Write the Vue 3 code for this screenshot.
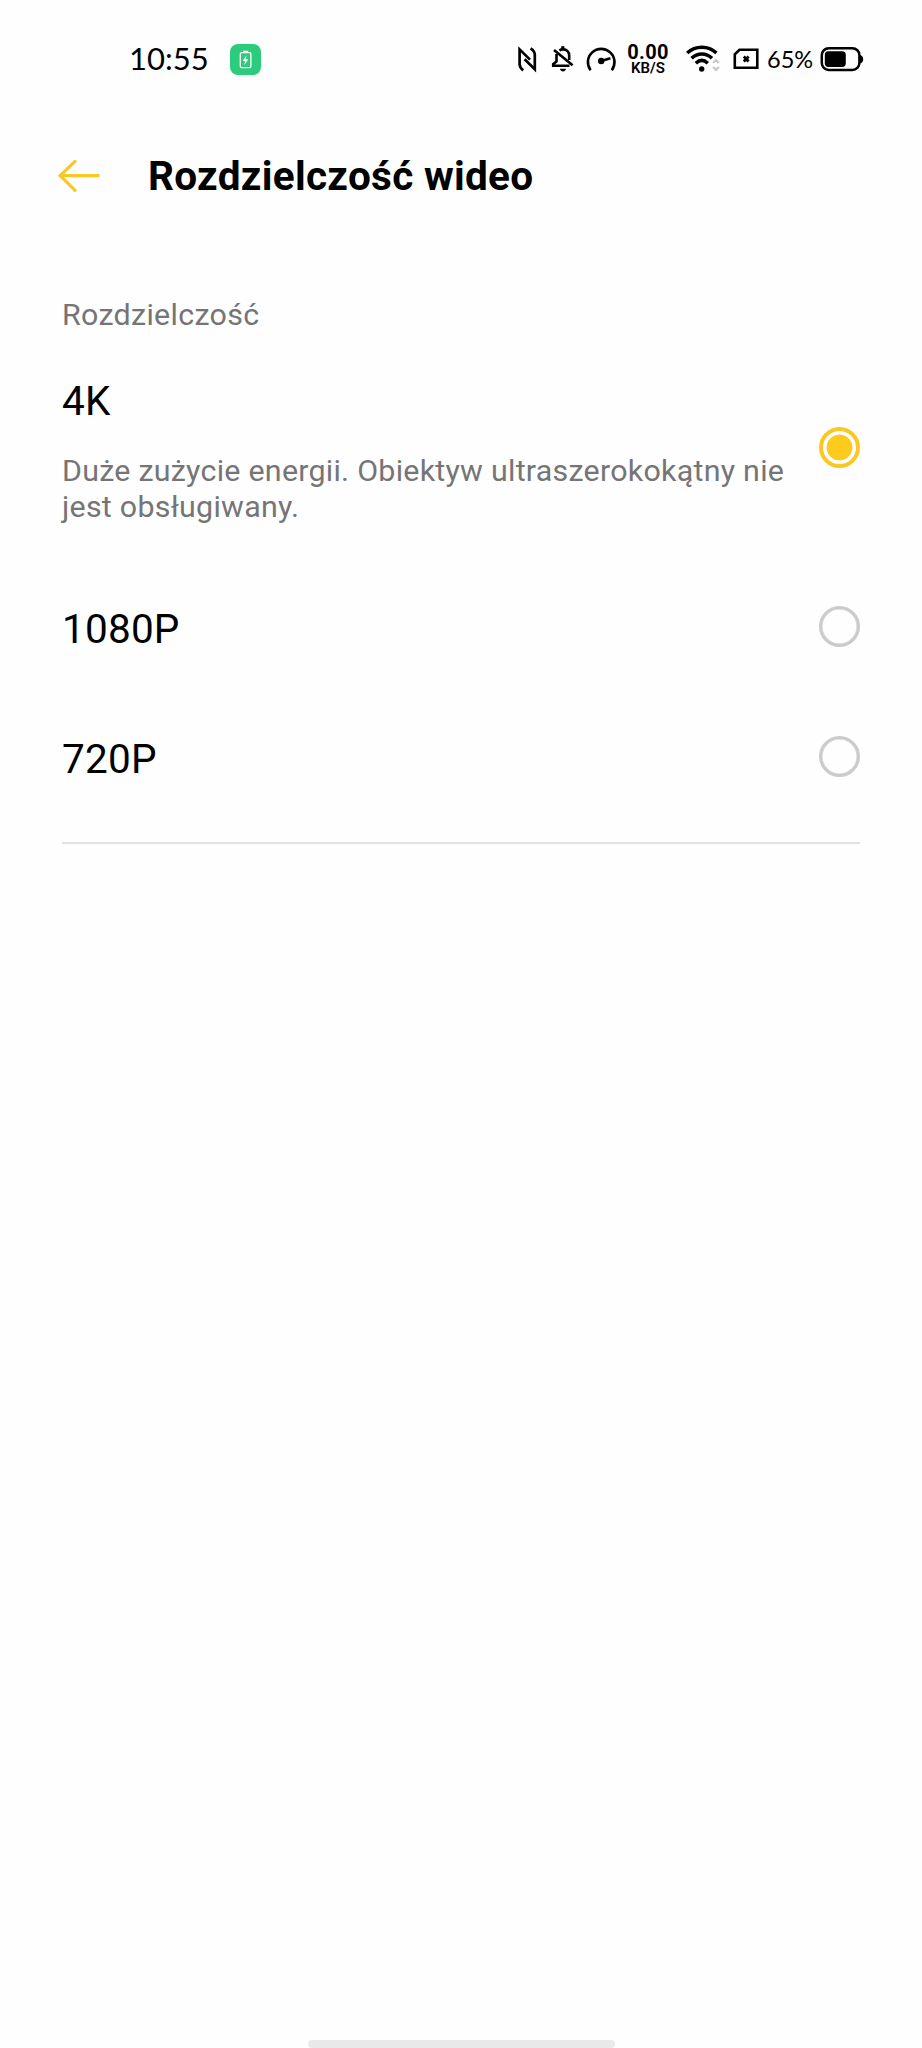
<template>
  <div class="screen">
    <header class="status-bar">
      <div class="status-left">
        <span class="clock">10:55</span>
        <span class="charge-badge">
          <svg width="31" height="31" viewBox="0 0 31 31" fill="none">
            <rect x="10.3" y="8.7" width="10.6" height="15" rx="1.4" stroke="#fff" stroke-width="1.3" />
            <path d="M13 7.5h5.2" stroke="#fff" stroke-width="1.6" />
            <path d="M16.6 11.3l-4 5.7h2.5l-.8 4 4-5.8h-2.6z" fill="#fff" />
          </svg>
        </span>
      </div>

      <div class="status-right">
        <!-- NFC -->
        <svg class="icon-nfc" width="20" height="30" viewBox="0 0 20 30" fill="none" stroke="#000" stroke-width="2.7">
          <path d="M5.2 26.4C2.6 24.4 1.6 22.8 1.6 20V5.4L12 15.6" />
          <path d="M12.6 4.4C15.8 6.4 16.8 8 16.8 10.8V25.2L6.6 15.2" />
        </svg>
        <!-- Wyciszony dzwonek -->
        <svg class="icon-bell" width="24" height="30" viewBox="0 0 24 30" fill="none" stroke="#000" stroke-width="2.6">
          <path d="M8.4 6.6C9.4 5.8 10.6 5.4 12 5.4C16 5.4 18.2 8 18.2 11.6V16" />
          <path d="M5.5 10V17.5L2.2 20.2V21.8H18.5" />
          <path d="M11.8 2.2V5" stroke-width="3.2" />
          <path d="M3 6L21.6 21.2" />
          <path d="M9 24.8H15C14.6 26.5 13.6 27.4 12 27.4S9.4 26.5 9 24.8Z" fill="#000" stroke="none" />
        </svg>
        <!-- Prędkość -->
        <svg class="icon-gauge" width="32" height="30" viewBox="0 0 32 30" fill="none" stroke="#000" stroke-width="2.6">
          <path d="M4.6 26.2A13.3 13.3 0 1 1 25.8 26.2" />
          <path d="M15.2 17L24.4 14.2" stroke-width="2.5" />
          <circle cx="15.2" cy="17" r="3.2" fill="#000" stroke="none" />
        </svg>
        <div class="net-speed">
          <span class="net-value">0.00</span>
          <span class="net-unit">KB/S</span>
        </div>
        <!-- Wi-Fi -->
        <svg class="icon-wifi" width="36" height="30" viewBox="0 0 36 30" fill="none" stroke="#000" stroke-width="3.6">
          <path d="M1.2 9C9.5 1.4 22.1 1.4 30.4 9" />
          <path d="M5.6 14.2C11.6 8.6 20 8.6 26 14.2" />
          <path d="M9.8 19.2C13.6 15.7 18 15.7 21.8 19.2" />
          <circle cx="15.7" cy="25" r="2.7" fill="#000" stroke="none" />
          <path d="M27.1 19L30 16.2L32.9 19" stroke="#c9c9c9" stroke-width="2.3" />
          <path d="M27.1 23L30 25.8L32.9 23" stroke="#c9c9c9" stroke-width="2.3" />
        </svg>
        <!-- Brak karty SIM -->
        <svg class="icon-sim" width="26" height="30" viewBox="0 0 26 30" fill="none" stroke="#000" stroke-width="2.6">
          <path d="M6.5 5.8H24.3V23.8H1.8V10.3Z" />
          <path d="M10.8 12.6L15.6 17.4M15.6 12.6L10.8 17.4" stroke-width="2.8" />
        </svg>
        <span class="battery-level">65%</span>
        <!-- Bateria -->
        <svg class="icon-battery" width="44" height="30" viewBox="0 0 44 30" fill="none">
          <rect x="1.8" y="4.2" width="37.6" height="21.8" rx="7" stroke="#000" stroke-width="2.5" />
          <rect x="4.8" y="7.3" width="21" height="15.6" rx="3.6" fill="#000" />
          <path d="M40 11C42 11.5 43.2 13 43.2 15.2S42 19 40 19.5Z" fill="#000" />
        </svg>
      </div>
    </header>

    <div class="title-bar">
      <button class="back-btn" aria-label="Wstecz">
        <svg width="42" height="34" viewBox="0 0 42 34" fill="none" stroke="#f9c822" stroke-width="3.2" stroke-linecap="round" stroke-linejoin="round">
          <path d="M17 2.4L2.2 16.7L17 31.3" />
          <path d="M2.2 16.7H40.2" />
        </svg>
      </button>
      <h1 class="title">Rozdzielczość wideo</h1>
    </div>

    <main class="content">
      <p class="section-label">Rozdzielczość</p>
      <div class="options" role="radiogroup">
        <div
          v-for="option in options"
          :key="option.name"
          class="option"
          :class="{ 'has-description': option.description }"
          role="radio"
          :aria-checked="selected === option.name"
          @click="selected = option.name"
        >
          <div class="option-text">
            <div class="option-name">{{ option.name }}</div>
            <p v-if="option.description" class="option-description">{{ option.description }}</p>
          </div>
          <span class="radio" :class="{ checked: selected === option.name }"></span>
        </div>
      </div>
    </main>

    <div class="home-indicator"></div>
  </div>
</template>

<script setup>
import { ref } from 'vue';

const options = [
  {
    name: '4K',
    description: 'Duże zużycie energii. Obiektyw ultraszerokokątny nie jest obsługiwany.'
  },
  { name: '1080P' },
  { name: '720P' }
];

const selected = ref('4K');
</script>

<style>
body {
  margin: 0;
  background: #fefefe;
}
</style>

<style scoped>
.screen {
  display: flex;
  flex-direction: column;
  width: 922px;
  height: 2048px;
  overflow: hidden;
  background: #fefefe;
  color: #000;
  font-family: Roboto, "Liberation Sans", sans-serif;
}

/* Pasek stanu */
.status-bar {
  display: flex;
  justify-content: space-between;
  height: 118px;
  padding: 0 58px 0 129px;
}

.status-left,
.status-right {
  display: flex;
  align-items: center;
}

.clock {
  width: 101px;
  padding-bottom: 2px;
  font-family: Lato, sans-serif;
  font-size: 31px;
  line-height: 36px;
}

.charge-badge {
  width: 31px;
  height: 31px;
  border-radius: 8px;
  background: #2dcc7c;
}

.icon-bell {
  margin-left: 13px;
}

.icon-gauge {
  margin-left: 11px;
}

.net-speed {
  display: flex;
  flex-direction: column;
  align-items: center;
  width: 42px;
  margin-left: 9px;
  margin-right: 1px;
  padding-top: 2px;
}

.net-value {
  font-size: 20px;
  font-weight: 700;
  letter-spacing: 0.3px;
  line-height: 17px;
}

.net-unit {
  font-size: 15px;
  font-weight: 600;
  line-height: 15px;
}

.icon-wifi {
  margin-left: 16px;
}

.icon-sim {
  margin-left: 11px;
}

.battery-level {
  width: 53px;
  margin-left: 8px;
  font-family: Lato, sans-serif;
  font-size: 23.5px;
  line-height: 30px;
}

/* Nagłówek */
.title-bar {
  display: flex;
  align-items: center;
  height: 116px;
  padding-left: 58px;
}

.back-btn {
  display: flex;
  padding: 0;
  border: none;
  background: none;
}

.title {
  margin: 0 0 0 48px;
  font-size: 40.5px;
  font-weight: 700;
  letter-spacing: 0.3px;
  line-height: 48px;
}

.content {
  flex: 1;
  padding: 63px 62px 0;
}

.section-label {
  margin: 0;
  color: #757575;
  font-size: 30.4px;
  letter-spacing: 0.3px;
  line-height: 36px;
}

.options {
  padding-bottom: 21px;
  border-bottom: 2px solid #e2e2e2;
}

.option {
  display: flex;
  align-items: center;
  justify-content: space-between;
  min-height: 130px;
  cursor: pointer;
}

.option.has-description {
  min-height: 228px;
}

.option-text {
  width: 735px;
  padding-top: 5px;
}

.has-description .option-text {
  padding-top: 8px;
}

.option-name {
  font-size: 40.5px;
  letter-spacing: 0.2px;
  line-height: 48px;
}

.option-description {
  margin: 28px 0 0;
  color: #757575;
  font-size: 30.4px;
  letter-spacing: 0.25px;
  line-height: 36px;
}

.radio {
  box-sizing: border-box;
  width: 41px;
  height: 41px;
  border: 3px solid #cbcbcb;
  border-radius: 50%;
  box-shadow: inset 0 0 0 0.5px #cbcbcb;
}

.radio.checked {
  border: 4px solid #f9c822;
  background: radial-gradient(circle, #fccb1c 12.5px, transparent 13.3px);
  box-shadow: none;
}

.home-indicator {
  align-self: center;
  width: 307px;
  height: 8px;
  border-radius: 4px;
  background: #e9e9e9;
}
</style>
